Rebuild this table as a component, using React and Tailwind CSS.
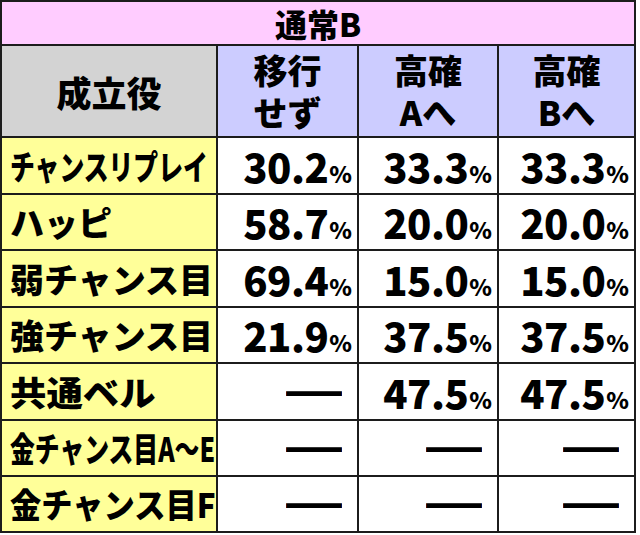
const rows = [
  { label: 'チャンスリプレイ', squeeze: 'scale-x-[0.73]', vals: ['30.2', '33.3', '33.3'] },
  { label: 'ハッピ', vals: ['58.7', '20.0', '20.0'] },
  { label: '弱チャンス目', vals: ['69.4', '15.0', '15.0'] },
  { label: '強チャンス目', vals: ['21.9', '37.5', '37.5'] },
  { label: '共通ベル', squeeze: 'scale-x-[1.07]', vals: [null, '47.5', '47.5'] },
  { label: '金チャンス目A〜E', squeeze: 'scale-x-[0.73]', vals: [null, null, null] },
  { label: '金チャンス目F', squeeze: 'scale-x-[0.92]', vals: [null, null, null] },
];

const rowHeights = ['h-[55px]', 'h-[54px]', 'h-[55px]', 'h-[54px]', 'h-[55px]', 'h-[54px]', 'h-[54px]'];

export default function App() {
  return (
    <div className="w-[640px] h-[535px] bg-white text-black font-['Noto_Sans_CJK_JP','Noto_Sans',sans-serif]">
      <div className="grid grid-cols-[214px_139px_138px_135px] gap-[2px] p-[2px] bg-[#1c1c1c] w-[636px]">
        <div className="col-span-4 h-[42px] bg-[#ffccff] flex items-center justify-center text-[32px] font-black leading-none">
          通常B
        </div>

        <div className="h-[90px] bg-[#d3d3d3] flex items-center justify-center text-[35px] font-black leading-none">
          成立役
        </div>
        <HeadCell top="移行" bottom="せず" />
        <HeadCell top="高確" bottom="Aへ" />
        <HeadCell top="高確" bottom="Bへ" />

        {rows.map((r, i) => (
          <Row key={r.label} row={r} height={rowHeights[i]} />
        ))}
      </div>
    </div>
  );
}

function HeadCell({ top, bottom }) {
  return (
    <div className="h-[90px] bg-[#ccccff] flex flex-col items-center justify-center gap-[8px] text-[34px] font-black leading-none">
      <span>{top}</span>
      <span>{bottom}</span>
    </div>
  );
}

function Row({ row, height }) {
  return (
    <>
      <div className={`${height} bg-[#ffff99] flex items-center pl-[8px] overflow-hidden`}>
        <span className={`inline-block whitespace-nowrap origin-left text-[34px] font-black leading-none ${row.squeeze || ''}`}>
          {row.label}
        </span>
      </div>
      {row.vals.map((v, j) => (
        <div key={j} className={`${height} bg-white flex items-center justify-end ${v ? 'pr-[5px]' : 'pr-[15px]'}`}>
          {v ? (
            <span className="whitespace-nowrap font-black leading-none">
              <span className="text-[40px] tracking-[-0.5px]">{v}</span>
              <span className="text-[23px] ml-[1px]">%</span>
            </span>
          ) : (
            <span className="inline-block origin-right scale-x-[1.4] text-[40px] leading-[20px]">━</span>
          )}
        </div>
      ))}
    </>
  );
}
